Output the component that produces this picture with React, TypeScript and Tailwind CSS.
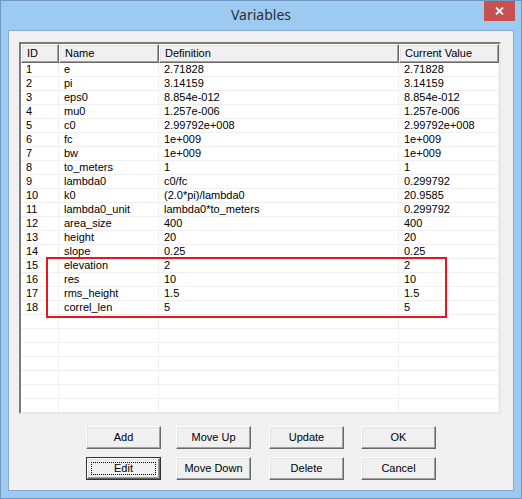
const rows: [number, string, string, string][] = [
  [1, 'e', '2.71828', '2.71828'],
  [2, 'pi', '3.14159', '3.14159'],
  [3, 'eps0', '8.854e-012', '8.854e-012'],
  [4, 'mu0', '1.257e-006', '1.257e-006'],
  [5, 'c0', '2.99792e+008', '2.99792e+008'],
  [6, 'fc', '1e+009', '1e+009'],
  [7, 'bw', '1e+009', '1e+009'],
  [8, 'to_meters', '1', '1'],
  [9, 'lambda0', 'c0/fc', '0.299792'],
  [10, 'k0', '(2.0*pi)/lambda0', '20.9585'],
  [11, 'lambda0_unit', 'lambda0*to_meters', '0.299792'],
  [12, 'area_size', '400', '400'],
  [13, 'height', '20', '20'],
  [14, 'slope', '0.25', '0.25'],
  [15, 'elevation', '2', '2'],
  [16, 'res', '10', '10'],
  [17, 'rms_height', '1.5', '1.5'],
  [18, 'correl_len', '5', '5'],
];

const widths = ['w-[38px]', 'w-[100px]', 'w-[240px]', 'w-[100px]'];
const headers = ['ID', 'Name', 'Definition', 'Current Value'];

const raised =
  'border border-t-white border-l-white border-r-[#696969] border-b-[#696969] shadow-[inset_-1px_-1px_0_#a0a0a0,inset_1px_1px_0_#e3e3e3] bg-[#f0f0f0]';

function Btn({ label, isDefault, className = '' }: { label: string; isDefault?: boolean; className?: string }) {
  if (isDefault) {
    return (
      <div className={`w-[75px] h-[23px] border border-[#333] ${className}`}>
        <div className={`w-full h-full ${raised} flex items-center justify-center p-[3px]`}>
          <div className="w-full h-full border border-dotted border-black flex items-center justify-center">
            {label}
          </div>
        </div>
      </div>
    );
  }
  return (
    <div className={`w-[75px] h-[23px] ${raised} flex items-center justify-center ${className}`}>
      {label}
    </div>
  );
}

export default function App() {
  const filler = Array.from({ length: 7 });
  return (
    <div
      className="w-[522px] h-[499px] bg-[#9dcaf0] border border-[#6f97bf] flex flex-col text-[11px] text-black"
      style={{ fontFamily: '"Liberation Sans", Arial, sans-serif' }}
    >
      {/* title bar */}
      <div className="relative h-[29px] shrink-0 flex items-center justify-center">
        <span
          className="text-[14px] text-[#2e2e2e] pb-[2px]"
          style={{ fontFamily: '"Noto Sans", "Open Sans", sans-serif' }}
        >
          Variables
        </span>
        <div className="absolute right-[6px] top-0 w-[31px] h-[20px] bg-[#c75050] flex items-center justify-center">
          <svg width="9" height="8" viewBox="0 0 9 8">
            <path d="M1 0.5 L8 7.5 M8 0.5 L1 7.5" stroke="white" strokeWidth="1.8" />
          </svg>
        </div>
      </div>

      {/* client area */}
      <div className="mx-[7px] h-[461px] bg-[#f0f0f0] border border-[#86abd2] flex flex-col">
        <div className="ml-[10px] mt-[11px] w-[482px] h-[372px] border-2 border-t-[#7a7a7a] border-l-[#7a7a7a] border-r-[#e8e8e8] border-b-[#e8e8e8] bg-white overflow-hidden relative">
          <div className="flex h-[19px] bg-[#f0f0f0]">
            {headers.map((h, i) => (
              <div key={h} className={`${widths[i]} h-[19px] ${raised} pl-[5px] flex items-center`}>
                {h}
              </div>
            ))}
          </div>
          {rows.map((r) => (
            <div key={r[0]} className="flex h-[14px]">
              {r.map((c, i) => (
                <div
                  key={i}
                  className={`${widths[i]} h-[14px] border-b border-r border-[#f0f0f0] pl-[5px] leading-[13px] whitespace-nowrap`}
                >
                  {c}
                </div>
              ))}
            </div>
          ))}
          {filler.map((_, k) => (
            <div key={k} className="flex h-[14px]">
              {widths.map((w, i) => (
                <div key={i} className={`${w} h-[14px] border-b border-r border-[#f0f0f0]`} />
              ))}
            </div>
          ))}
          <div className="absolute left-[25px] top-[213px] w-[401px] h-[61px] border-2 border-[#e5161f]" />
        </div>

        <div className="flex flex-col mt-[12px] ml-[77px] gap-[8px]">
          <div className="flex">
            <Btn label="Add" />
            <Btn label="Move Up" className="ml-[15px]" />
            <Btn label="Update" className="ml-[18px]" />
            <Btn label="OK" className="ml-[17px]" />
          </div>
          <div className="flex">
            <Btn label="Edit" isDefault />
            <Btn label="Move Down" className="ml-[15px]" />
            <Btn label="Delete" className="ml-[18px]" />
            <Btn label="Cancel" className="ml-[17px]" />
          </div>
        </div>
      </div>
    </div>
  );
}
